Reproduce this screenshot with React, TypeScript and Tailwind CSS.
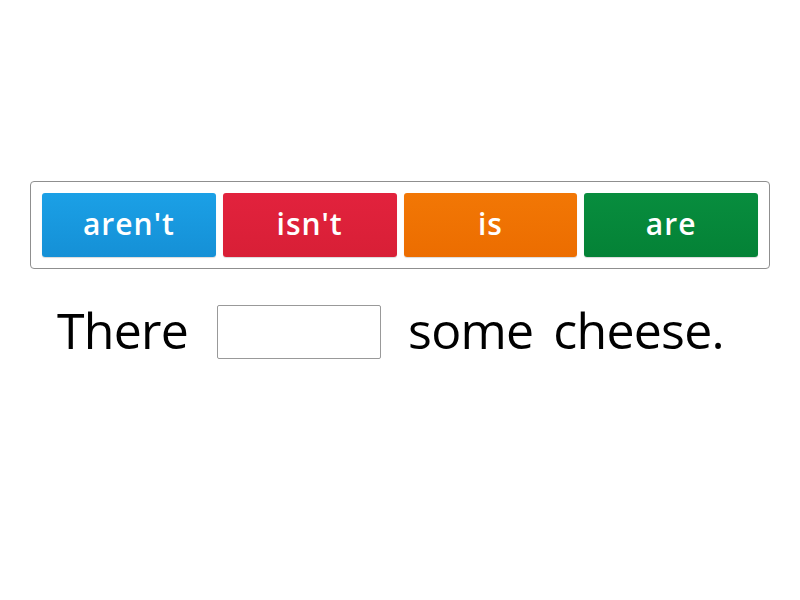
const words = [
  { label: "aren't", color: 'bg-gradient-to-b from-[#1ba0e6] to-[#1590d6]' },
  { label: "isn't", color: 'bg-gradient-to-b from-[#e2223d] to-[#d81f36]' },
  { label: 'is', color: 'bg-gradient-to-b from-[#f27705] to-[#ec6d00]' },
  { label: 'are', color: 'bg-gradient-to-b from-[#088d3e] to-[#048236]' },
];

export default function App() {
  return (
    <div className="w-[800px] h-[600px] bg-white font-['Open_Sans',sans-serif] pt-[181px]">
      <div className="mx-[30px] h-[88px] border border-[#8f8f8f] rounded-[4px] px-[11px] py-[11px] flex gap-[7px]">
        {words.map((w) => (
          <div
            key={w.label}
            className={`${w.color} w-[174px] h-[64px] rounded-[3px] flex items-center justify-center pb-[4px] text-white font-semibold text-[30px] tracking-[1px] shadow-[0_1px_1px_rgba(0,0,0,0.15)]`}
          >
            {w.label}
          </div>
        ))}
      </div>

      <div className="flex items-center mt-[36px] pl-[57px] text-[50px] tracking-[-0.75px] text-black leading-none">
        <span className="-translate-y-[2px]">There</span>
        <div className="ml-[29px] w-[164px] h-[54px] border border-[#999] rounded-[2px]" />
        <span className="ml-[27px] -translate-y-[2px]">some</span>
        <span className="ml-[20px] -translate-y-[2px]">cheese.</span>
      </div>
    </div>
  );
}
